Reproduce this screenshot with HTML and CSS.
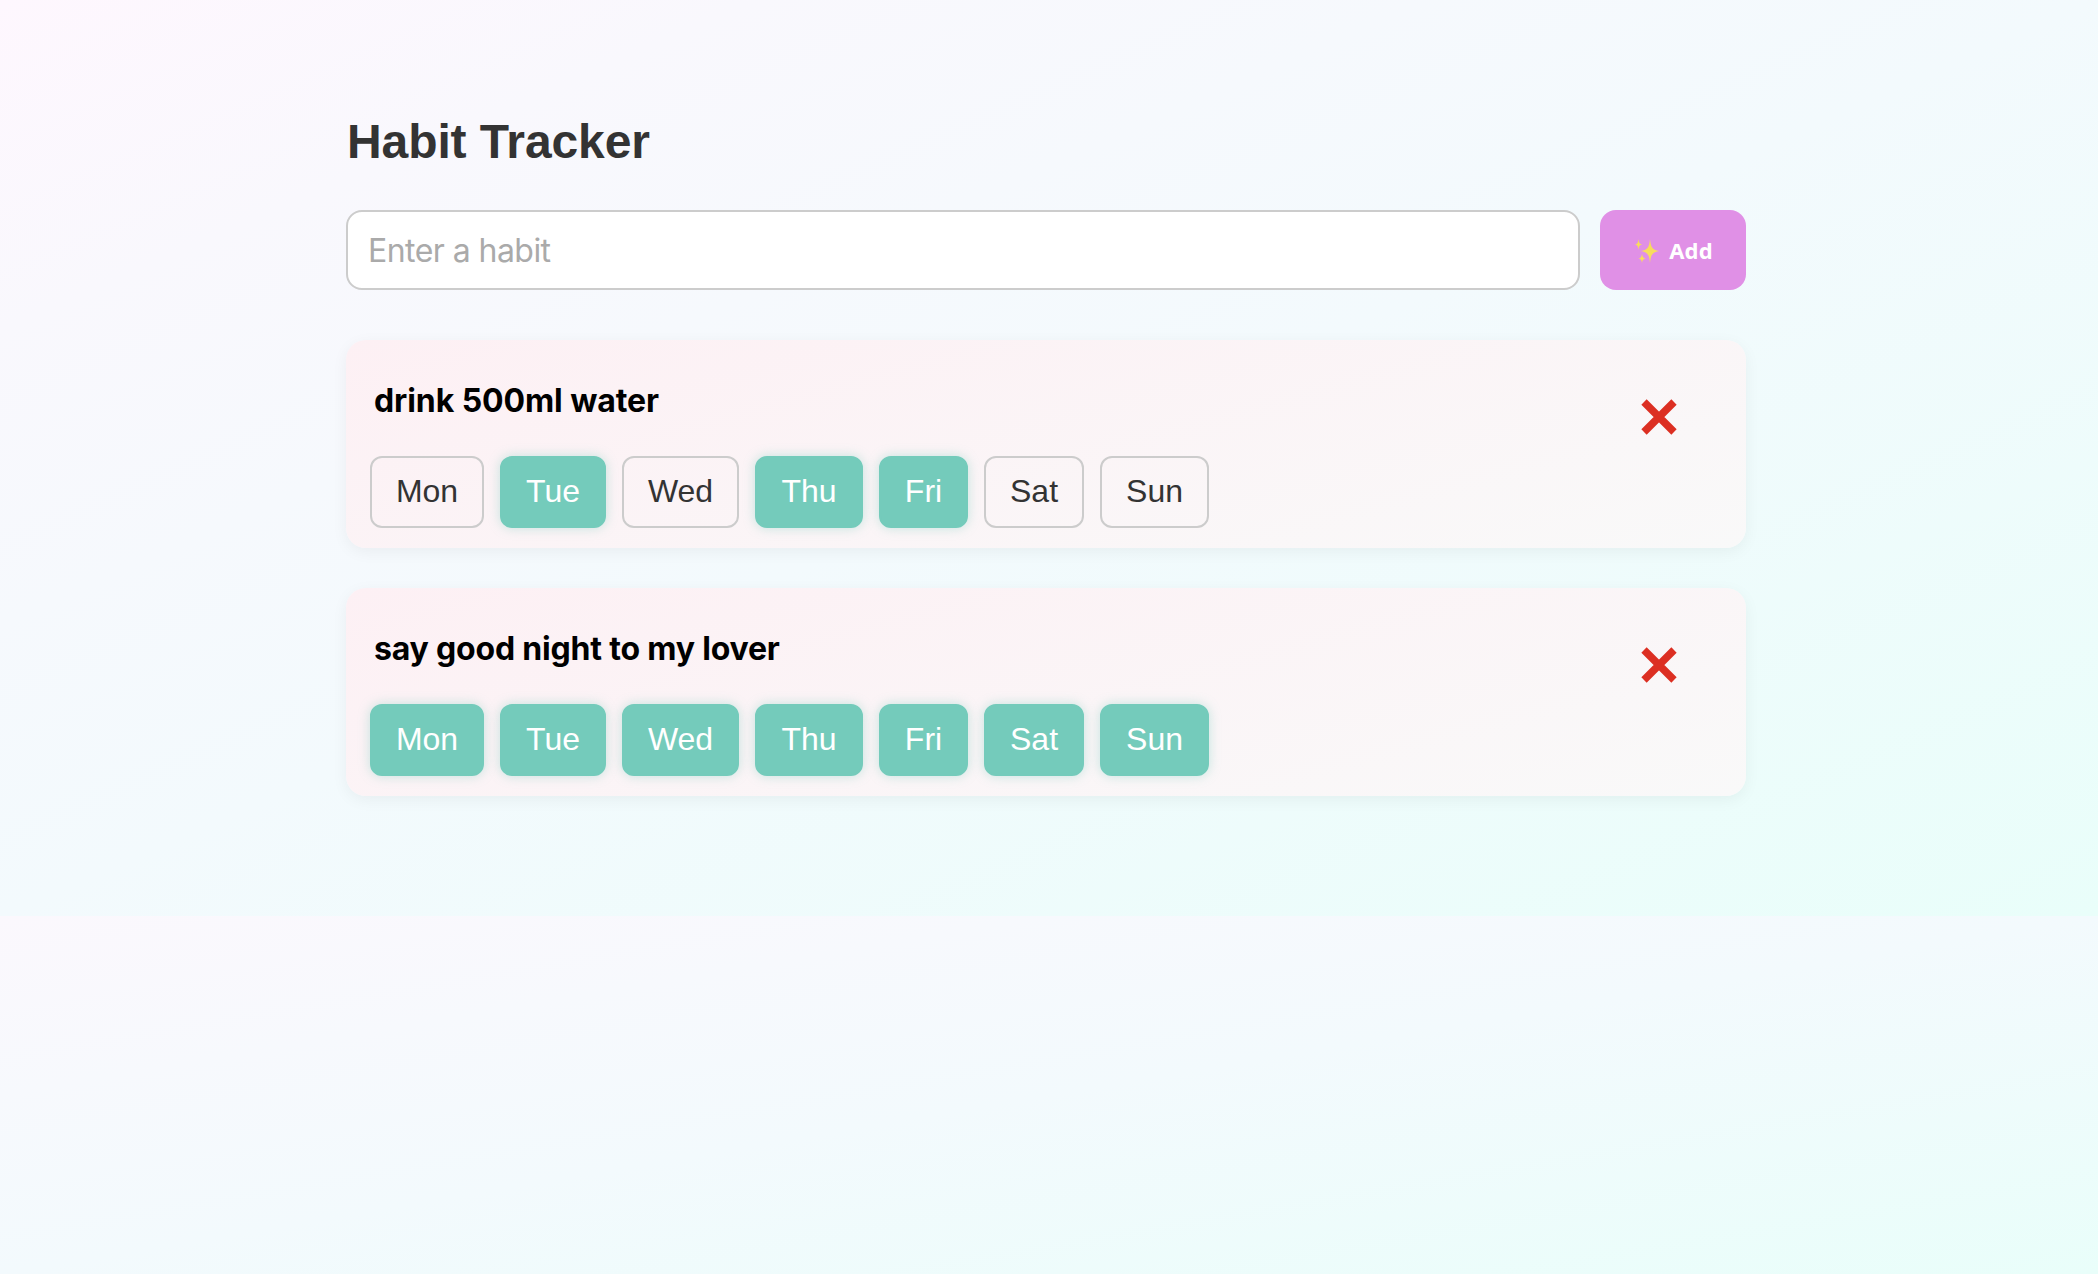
FILE: index.html
```html
<!DOCTYPE html>
<html lang="en">
<head>
<meta charset="utf-8">
<title>Habit Tracker</title>
<link rel="stylesheet" href="styles.css">
</head>
<body>
<div class="page">
  <main class="tracker">
    <h1 class="title">Habit Tracker</h1>
    <form class="entry">
      <input class="entry-input" type="text" placeholder="Enter a habit">
      <button class="entry-add" type="button">
        <svg class="sparkles" viewBox="0 0 24 24" aria-hidden="true">
          <path d="M15 0C15.8 8 17 10.7 24 12C17 13.3 15.8 16 15 24C14.2 16 13 13.3 6 12C13 10.7 14.2 8 15 0Z"/>
          <path d="M3.5 0C3.9 3.6 4.5 4.9 7.2 5.5C4.5 6.1 3.9 7.4 3.5 11C3.1 7.4 2.5 6.1 0 5.5C2.5 4.9 3.1 3.6 3.5 0Z"/>
          <path d="M7 14.5C7.4 17.8 8 19 10.6 19.5C8 20 7.4 21.2 7 24C6.6 21.2 6 20 3.6 19.5C6 19 6.6 17.8 7 14.5Z"/>
        </svg>
        <span>Add</span>
      </button>
    </form>
    <ul class="habits">
      <li class="habit">
        <div class="habit-body">
          <h2 class="habit-name">drink 500ml water</h2>
          <div class="days">
            <button class="day mon">Mon</button>
            <button class="day tue done">Tue</button>
            <button class="day wed">Wed</button>
            <button class="day thu done">Thu</button>
            <button class="day fri done">Fri</button>
            <button class="day sat">Sat</button>
            <button class="day sun">Sun</button>
          </div>
        </div>
        <button class="remove" aria-label="Remove habit">
          <svg viewBox="0 0 36 36"><path d="M3 3L33 33M33 3L3 33"/></svg>
        </button>
      </li>
      <li class="habit">
        <div class="habit-body">
          <h2 class="habit-name long">say good night to my lover</h2>
          <div class="days">
            <button class="day mon done">Mon</button>
            <button class="day tue done">Tue</button>
            <button class="day wed done">Wed</button>
            <button class="day thu done">Thu</button>
            <button class="day fri done">Fri</button>
            <button class="day sat done">Sat</button>
            <button class="day sun done">Sun</button>
          </div>
        </div>
        <button class="remove" aria-label="Remove habit">
          <svg viewBox="0 0 36 36"><path d="M3 3L33 33M33 3L3 33"/></svg>
        </button>
      </li>
    </ul>
  </main>
</div>
<div class="page-rest"></div>
</body>
</html>
```
FILE: styles.css
```css
* { box-sizing: border-box; }

html { height: 100%; }

body {
  display: flex;
  flex-direction: column;
  height: 100%;
  margin: 0;
  font-family: Inter, "Liberation Sans", sans-serif;
}

.page {
  flex: none;
  height: 916px;
  padding-top: 112px;
  background: linear-gradient(to bottom right, #fef7fe, #f9f8fd 18%, #f3fafd 50%, #e9fefa);
}

.page-rest {
  flex: 1;
  background: linear-gradient(to bottom right, #fbf8fd, #f3fafd 50%, #e9fefa);
}

.tracker {
  width: 1400px;
  margin-left: 346px;
}

.title {
  margin: 0 0 38px;
  padding-left: 1px;
  font: bold 48px/60px "Liberation Sans", Arial, sans-serif;
  letter-spacing: -0.1px;
  color: #333;
}

.entry {
  display: flex;
  gap: 20px;
  height: 80px;
}

.entry-input {
  flex: 1;
  padding: 0 20px;
  border: 2px solid #ccc;
  border-radius: 16px;
  background: #fff;
  font: 32px Inter, sans-serif;
  letter-spacing: -0.55px;
}

.entry-input::placeholder { color: #aaa; }

.entry-add {
  display: flex;
  align-items: center;
  justify-content: center;
  gap: 10px;
  width: 146px;
  padding: 0 0 0 2px;
  border: 0;
  border-radius: 16px;
  background: #e090e6;
  color: #fff;
  font: bold 22px "Noto Sans", sans-serif;
  letter-spacing: 0.2px;
}

.sparkles {
  width: 24px;
  height: 24px;
  margin-top: 2px;
  fill: #f8dc5c;
}

.habits {
  display: flex;
  flex-direction: column;
  gap: 40px;
  margin: 50px 0 0;
  padding: 0;
  list-style: none;
}

.habit {
  display: flex;
  justify-content: space-between;
  height: 208px;
  padding: 40px 69px 20px 24px;
  border-radius: 20px;
  background: linear-gradient(165deg, #fdf0f4, #f9f9f9);
  box-shadow: 0 4px 16px rgba(0, 0, 0, 0.05);
}

.habit-name {
  margin: 0 0 35px 4px;
  font: 700 32px/41px Inter, sans-serif;
  letter-spacing: -0.09px;
  color: #000;
}

.habit-name.long { letter-spacing: -0.19px; }

.days {
  display: flex;
  gap: 16px;
}

.day {
  height: 72px;
  padding: 0 0 2px;
  border: 2px solid #ccc;
  border-radius: 12px;
  background: transparent;
  font: 32px "Liberation Sans", Arial, sans-serif;
  color: #333;
}

.done {
  border-color: #74cbbb;
  background: #74cbbb;
  box-shadow: 0 0 12px rgba(116, 203, 187, 0.4);
  color: #fff;
}

.mon { width: 114px; }
.tue { width: 106px; }
.wed { width: 117px; }
.thu { width: 108px; }
.fri { width: 89px; }
.sat { width: 100px; }
.sun { width: 109px; }

.remove {
  width: 36px;
  height: 36px;
  margin-top: 19px;
  padding: 0;
  border: 0;
  background: none;
}

.remove svg {
  display: block;
  width: 36px;
  height: 36px;
  stroke: #dc2f22;
  stroke-width: 7.5;
}
```
